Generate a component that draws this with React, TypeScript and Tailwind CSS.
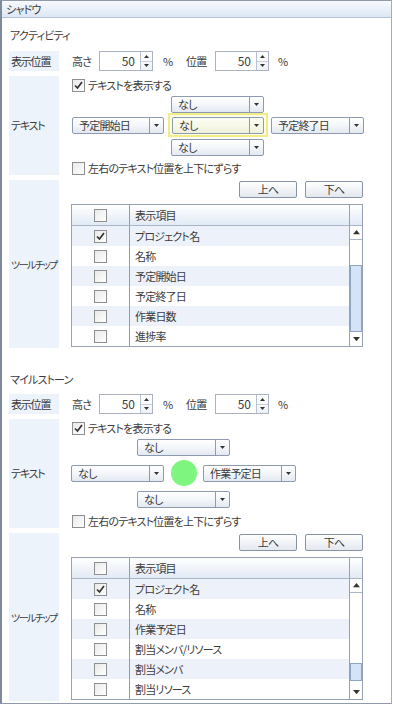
import React from 'react'

const jp = "font-['Noto_Sans_CJK_JP','Noto_Sans',sans-serif] [font-feature-settings:'palt'] tracking-[-0.8px]"

function Check({ checked = false }: { checked?: boolean }) {
  return (
    <span className="w-[13px] h-[13px] flex-shrink-0 border border-[#8e8f8f] bg-linear-to-br from-[#e9e9e9] to-white flex items-center justify-center">
      {checked && (
        <svg width="9" height="9" viewBox="0 0 9 9">
          <path d="M1 4.5 L3.5 7 L8 1" fill="none" stroke="#333" strokeWidth="1.7" />
        </svg>
      )}
    </span>
  )
}

function Tri({ up = false, w = 6 }: { up?: boolean; w?: number }) {
  return (
    <svg width={w} height={w * 0.6} viewBox="0 0 6 3.6">
      <path d={up ? 'M0 3.6 L3 0 L6 3.6 Z' : 'M0 0 L6 0 L3 3.6 Z'} fill="#333" />
    </svg>
  )
}

function Dropdown({ value, w = 'w-[93px]' }: { value: string; w?: string }) {
  return (
    <div className={`${w} h-[17px] flex flex-shrink-0 border border-[#8d9ab0] rounded-[2px] bg-linear-to-b from-white via-[#f3f6fa] to-[#e3e9f1]`}>
      <span className="flex-1 pl-[6px] text-[11px] leading-[15px] whitespace-nowrap">{value}</span>
      <span className="w-[14px] border-l border-[#8d9ab0] flex items-center justify-center">
        <Tri w={5} />
      </span>
    </div>
  )
}

function Spin() {
  return (
    <div className="w-[54px] h-[20px] flex border border-[#abb3c0] bg-white">
      <span className="flex-1 text-right pr-[5px] text-[12px] leading-[18px] tracking-normal">50</span>
      <span className="w-[12px] border-l border-[#b8c2d0] flex flex-col bg-linear-to-b from-white to-[#eef2f7]">
        <span className="flex-1 flex items-center justify-center border-b border-[#c8d0dc]"><Tri up w={5} /></span>
        <span className="flex-1 flex items-center justify-center"><Tri w={5} /></span>
      </span>
    </div>
  )
}

function Btn({ label }: { label: string }) {
  return (
    <div className="w-[58px] h-[17px] border border-[#8794a7] rounded-[2px] bg-linear-to-b from-white to-[#e3e8ef] flex items-center justify-center text-[11px]">
      {label}
    </div>
  )
}

function Label({ text, h, small = false }: { text: string; h: string; small?: boolean }) {
  return (
    <div
      className={`w-[50px] ${h} flex-shrink-0 bg-[#edf3fb] flex items-center pl-[2px] whitespace-nowrap ${
        small ? 'text-[10px] tracking-[-1.5px]' : 'text-[11px] tracking-[-1.2px]'
      }`}
    >
      {text}
    </div>
  )
}

type Item = { label: string; on?: boolean }

function ToolTable({ items, track, thumb }: { items: Item[]; track: string; thumb: string }) {
  return (
    <div className="w-[292px] flex border border-[#96a2b3]">
      <div className="flex-1 flex flex-col">
        <div className="h-[21px] flex border-b border-[#aab6c7] bg-linear-to-b from-white to-[#e2eaf5]">
          <div className="w-[58px] border-r border-[#9a9a9a] flex items-center justify-center"><Check /></div>
          <div className="flex-1 pl-[5px] flex items-center text-[11px]">表示項目</div>
        </div>
        {items.map((it, i) => (
          <div key={it.label} className={`h-[20px] flex ${i % 2 === 0 ? 'bg-[#edf2fa]' : 'bg-white'}`}>
            <div className="w-[58px] border-r border-[#9a9a9a] flex items-center justify-center"><Check checked={it.on} /></div>
            <div className="flex-1 pl-[5px] flex items-center text-[11px] whitespace-nowrap">{it.label}</div>
          </div>
        ))}
      </div>
      <div className="w-[13px] border-l border-[#96a2b3] flex flex-col">
        <div className="h-[21px] border-b border-[#aab6c7] bg-linear-to-b from-white to-[#e2eaf5]" />
        <div className="h-[14px] border-b border-[#aab6c7] flex items-center justify-center"><Tri up w={7} /></div>
        <div className={`${track} flex-shrink-0`} />
        <div className={`${thumb} flex-shrink-0 bg-[#d5e3f6] border border-[#8fa5c4]`} />
        <div className="flex-1" />
        <div className="h-[14px] flex items-center justify-center"><Tri w={7} /></div>
      </div>
    </div>
  )
}

function Position() {
  return (
    <div className="flex gap-[12px]">
      <Label text="表示位置" h="h-[20px]" />
      <div className="flex items-center pl-[1px] text-[11px]">
        <span className="w-[27px]">高さ</span>
        <Spin />
        <span className="ml-[10px] w-[23px]">%</span>
        <span className="w-[29px]">位置</span>
        <Spin />
        <span className="ml-[9px]">%</span>
      </div>
    </div>
  )
}

function CheckLine({ checked, text, mt }: { checked?: boolean; text: string; mt: string }) {
  return (
    <div className={`${mt} h-[13px] flex items-center gap-[3px] pl-[1px] text-[11px] whitespace-nowrap`}>
      <Check checked={checked} />
      <span>{text}</span>
    </div>
  )
}

function Tooltip({ items, track, thumb }: { items: Item[]; track: string; thumb: string }) {
  return (
    <div className="flex gap-[12px]">
      <Label text="ツールチップ" h="h-auto" small />
      <div className="flex flex-col pt-[1px] pb-[1px]">
        <div className="w-[292px] flex justify-end gap-[8px]">
          <Btn label="上へ" />
          <Btn label="下へ" />
        </div>
        <div className="mt-[6px]">
          <ToolTable items={items} track={track} thumb={thumb} />
        </div>
      </div>
    </div>
  )
}

export default function App() {
  return (
    <div className={`w-[392px] h-[704px] bg-white border-l-2 border-t border-r border-b border-l-[#7f8a9c] border-t-[#8f9aab] border-r-[#a8adb5] border-b-[#8f9aab] flex flex-col text-[#3c3c3c] ${jp}`}>
      <div className="h-[17px] flex-shrink-0 flex items-center pl-[4px] bg-linear-to-b from-[#f7fafe] to-[#dce7f4] border-b border-[#b4c2d5] text-[11px]">
        シャドウ
      </div>
      <div className="flex flex-col pl-[7px]">
        <div className="pt-[10px] pb-[9px] leading-[14px] text-[11px] pl-[1px]">アクティビティ</div>
        <div className="flex flex-col gap-[5px]">
          <Position />
          <div className="flex gap-[12px]">
            <Label text="テキスト" h="h-auto" />
            <div className="flex flex-col items-start pt-[3px]">
              <CheckLine checked text="テキストを表示する" mt="mt-0" />
              <div className="mt-[4px] flex flex-col items-center">
                <Dropdown value="なし" />
                <div className="flex items-center">
                  <div className="pl-[1px]"><Dropdown value="予定開始日" w="w-[92px]" /></div>
                  <div className="ml-[4px] w-[100px] h-[24px] border-2 border-[#f2ec86] bg-[#fdfce6] flex items-center justify-center">
                    <div className="w-[92px] h-[17px] flex border border-[#8d9ab0] rounded-[2px] bg-linear-to-b from-[#fffff4] to-[#eef0dc]">
                      <span className="flex-1 pl-[6px] text-[11px] leading-[15px]">なし</span>
                      <span className="w-[14px] border-l border-[#8d9ab0] flex items-center justify-center"><Tri w={5} /></span>
                    </div>
                  </div>
                  <div className="ml-[3px]"><Dropdown value="予定終了日" /></div>
                </div>
                <div className="mt-[2px]"><Dropdown value="なし" /></div>
              </div>
              <CheckLine text="左右のテキスト位置を上下にずらす" mt="mt-[6px]" />
            </div>
          </div>
          <Tooltip
            items={[
              { label: 'プロジェクト名', on: true },
              { label: '名称' },
              { label: '予定開始日' },
              { label: '予定終了日' },
              { label: '作業日数' },
              { label: '進捗率' },
            ]}
            track="h-[25px]"
            thumb="h-[67px]"
          />
        </div>

        <div className="pt-[24px] pb-[8px] leading-[14px] text-[11px] pl-[1px]">マイルストーン</div>
        <div className="flex flex-col gap-[5px]">
          <Position />
          <div className="flex gap-[12px]">
            <Label text="テキスト" h="h-auto" />
            <div className="flex flex-col items-start pt-[3px]">
              <CheckLine checked text="テキストを表示する" mt="mt-0" />
              <div className="mt-[4px] flex flex-col items-center">
                <Dropdown value="なし" />
                <div className="mt-[4px] flex items-center">
                  <Dropdown value="なし" />
                  <div className="ml-[7px] w-[26px] h-[26px] rounded-full bg-[#7ef57e]" />
                  <div className="ml-[6px]"><Dropdown value="作業予定日" /></div>
                </div>
                <div className="mt-[5px]"><Dropdown value="なし" /></div>
              </div>
              <CheckLine text="左右のテキスト位置を上下にずらす" mt="mt-[7px]" />
            </div>
          </div>
          <Tooltip
            items={[
              { label: 'プロジェクト名', on: true },
              { label: '名称' },
              { label: '作業予定日' },
              { label: '割当メンバ/リソース' },
              { label: '割当メンバ' },
              { label: '割当リソース' },
            ]}
            track="h-[70px]"
            thumb="h-[18px]"
          />
        </div>
      </div>
    </div>
  )
}
